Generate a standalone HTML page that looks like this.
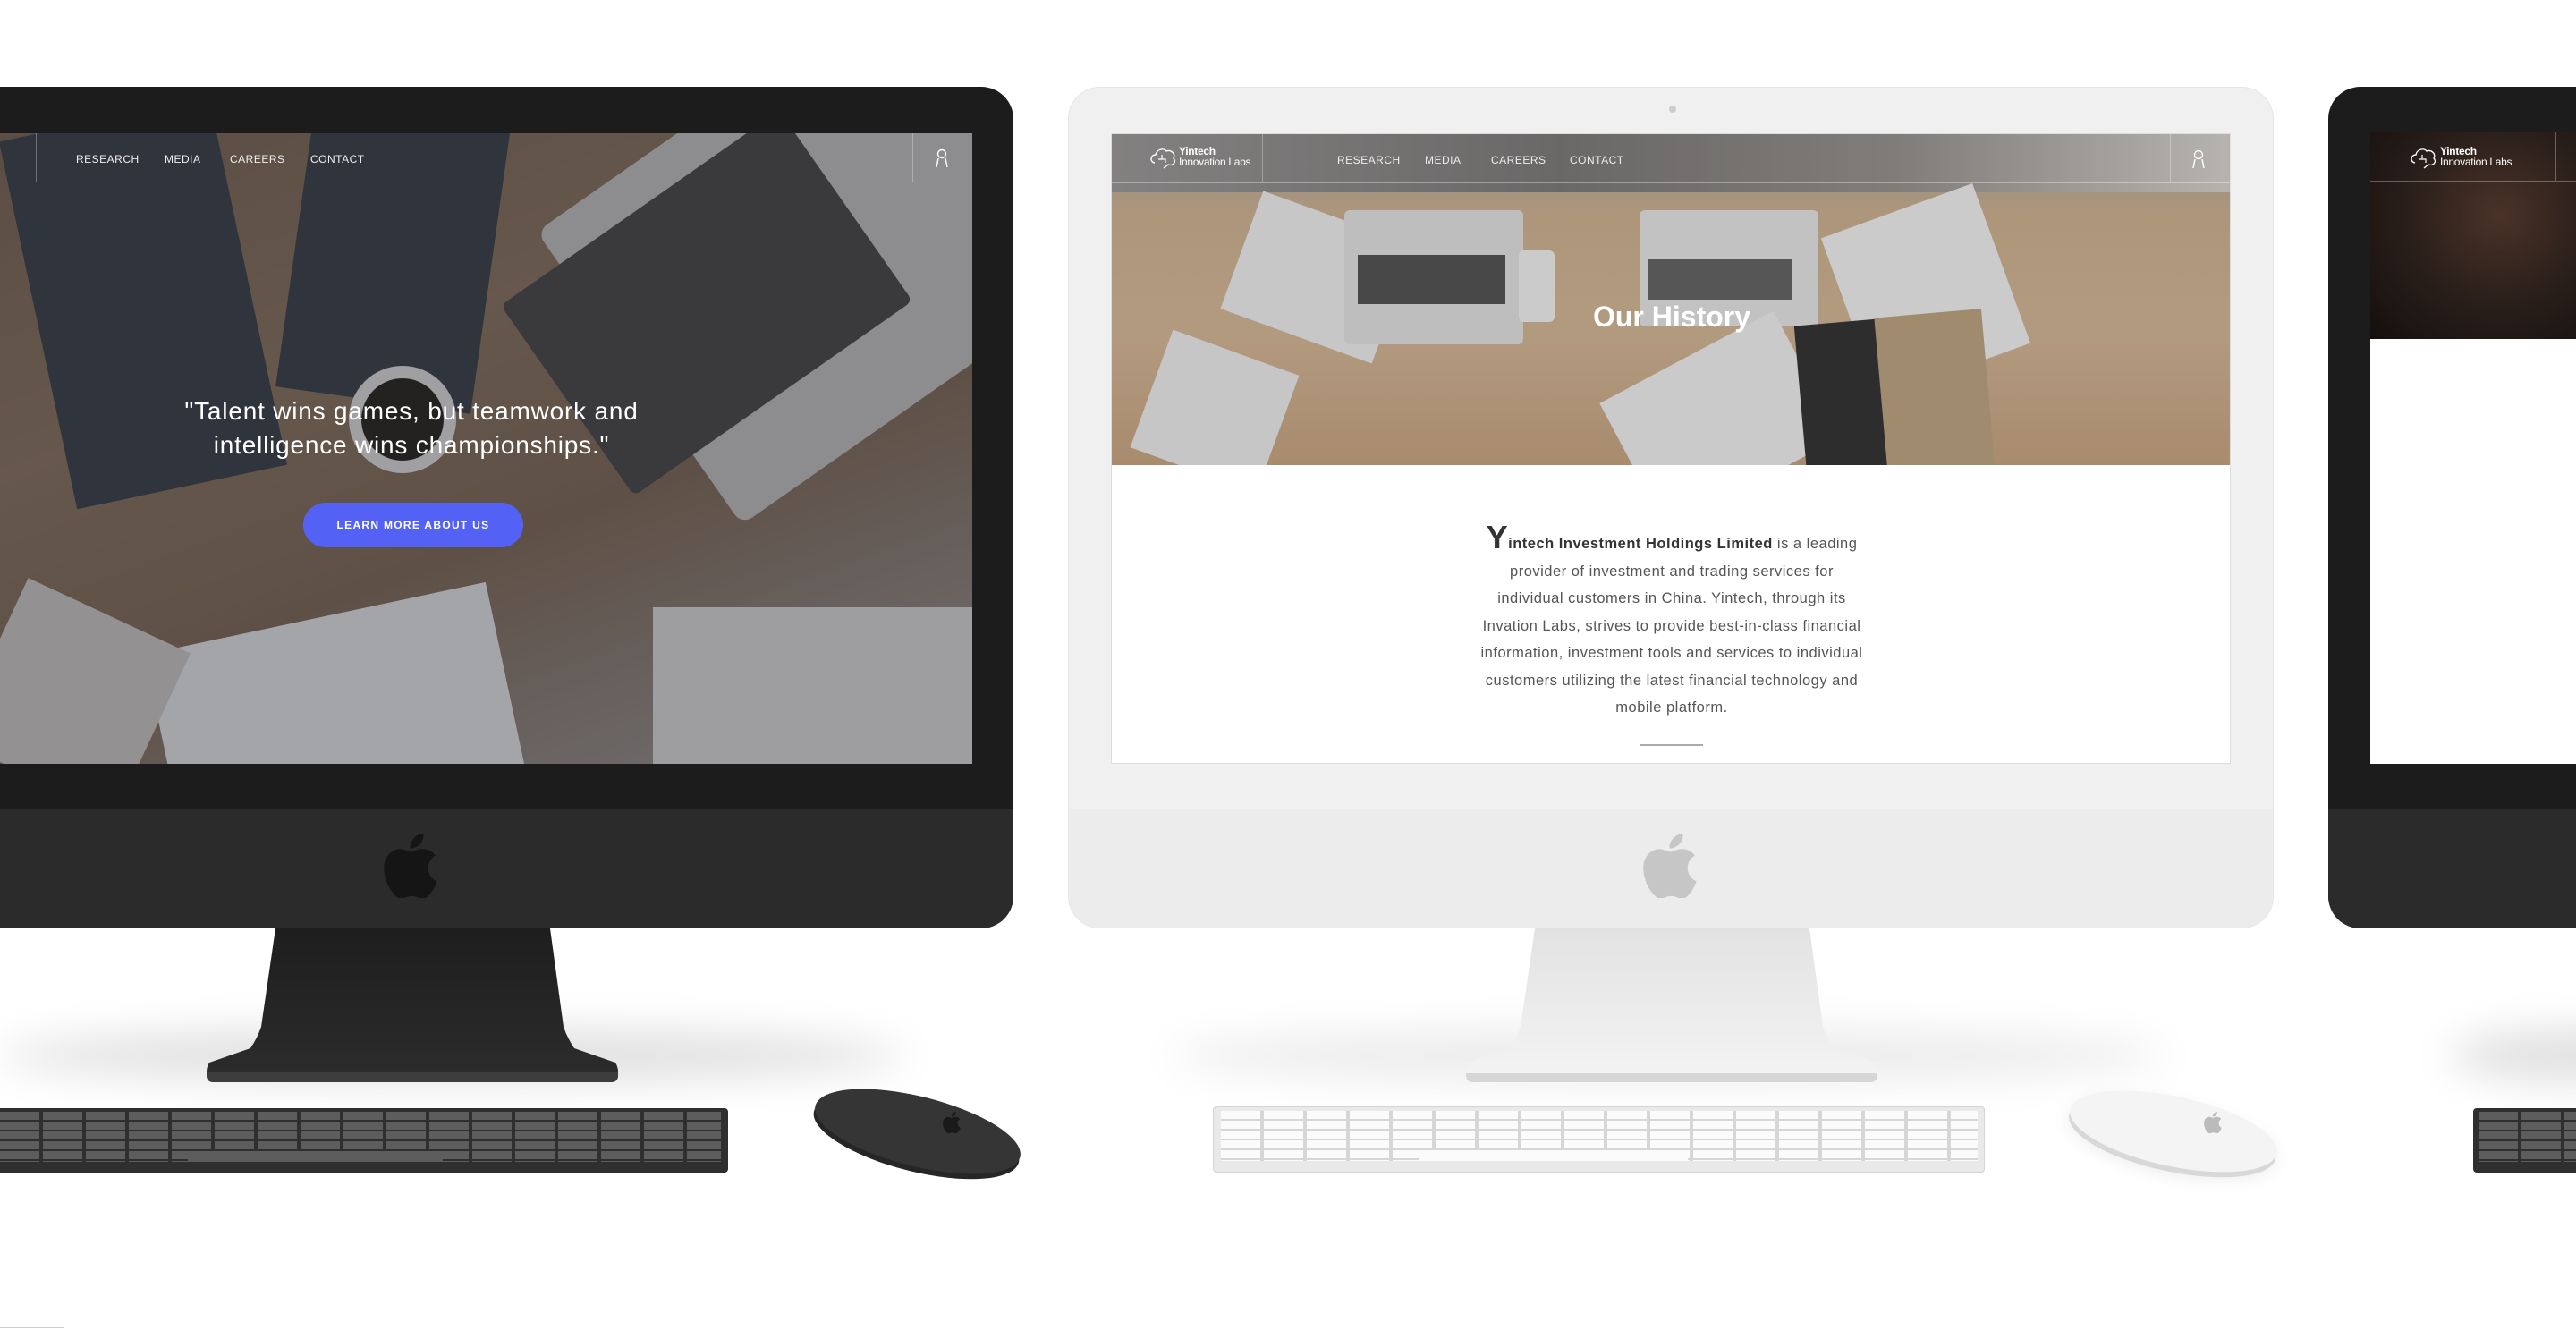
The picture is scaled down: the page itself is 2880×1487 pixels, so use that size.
<!DOCTYPE html>
<html><head><meta charset="utf-8"><style>
*{margin:0;padding:0;box-sizing:border-box}
body{width:2880px;height:1487px;background:#fff;position:relative;overflow:hidden;font-family:"Liberation Sans",sans-serif}
.a{position:absolute}
.nav{color:#eee;font-size:12px;letter-spacing:.5px}
.shadow{position:absolute;border-radius:50%;filter:blur(22px);background:rgba(0,0,0,.12)}
</style></head><body>

<div class="shadow" style="left:0;top:1150px;width:1010px;height:60px"></div>
<div class="shadow" style="left:1310px;top:1150px;width:1110px;height:60px;background:rgba(0,0,0,.08)"></div>
<div class="shadow" style="left:2740px;top:1150px;width:300px;height:60px"></div>

<!-- LEFT iMac -->
<div class="a" style="left:-40px;top:97px;width:1173px;height:941px;background:#1c1c1c;border-radius:36px;overflow:hidden">
  <div class="a" style="left:0;top:807px;width:100%;height:134px;background:#2b2b2b"></div>
</div>
<div class="a" style="left:0;top:149px;width:1087px;height:705px;overflow:hidden;background:linear-gradient(160deg,#6a5646 0%,#7a6452 35%,#6e5a49 60%,#8a8a8c 100%)">
  <div class="a" style="left:600px;top:110px;width:520px;height:400px;background:#b0b0b2;transform:rotate(-35deg);transform-origin:0 0;border-radius:14px"></div>
  <div class="a" style="left:600px;top:60px;width:380px;height:260px;background:#3a3a3c;transform:rotate(-35deg);border-radius:8px"></div>
  <div class="a" style="left:40px;top:-20px;width:240px;height:420px;background:#2c313a;transform:rotate(-12deg)"></div>
  <div class="a" style="left:330px;top:-30px;width:220px;height:330px;background:#2c313a;transform:rotate(8deg)"></div>
  <div class="a" style="left:730px;top:530px;width:400px;height:220px;background:#c9c9ca"></div>
  <div class="a" style="left:180px;top:540px;width:390px;height:220px;background:#d0d3d6;transform:rotate(-12deg)"></div>
  <div class="a" style="left:-20px;top:530px;width:200px;height:200px;background:#b9b7b3;transform:rotate(25deg)"></div>
  <div class="a" style="left:390px;top:260px;width:120px;height:120px;border-radius:50%;background:#1a1614;border:14px solid #ccc"></div>
  <div class="a" style="left:0;top:0;width:100%;height:100%;background:rgba(60,60,66,.3)"></div>
  <div class="a" style="left:40px;top:0;width:1px;height:54px;background:rgba(255,255,255,.3)"></div>
  <div class="a" style="left:1020px;top:0;width:1px;height:54px;background:rgba(255,255,255,.3)"></div>
  <div class="a" style="left:0;top:54px;width:100%;height:1px;background:rgba(255,255,255,.35)"></div>
  <div class="a nav" style="left:85px;top:22px">RESEARCH</div>
  <div class="a nav" style="left:184px;top:22px">MEDIA</div>
  <div class="a nav" style="left:257px;top:22px">CAREERS</div>
  <div class="a nav" style="left:347px;top:22px">CONTACT</div>
  <svg class="a" style="left:1045px;top:17px" width="16" height="22" viewBox="0 0 16 22"><circle cx="8" cy="6" r="4.5" fill="none" stroke="#fff" stroke-width="1.4"/><path d="M2 21 L4 11 M14 21 L12 11" stroke="#fff" stroke-width="1.4" fill="none"/></svg>
  <div class="a" style="left:0;top:292px;width:920px;text-align:center;color:#fff;font-size:28px;line-height:38px;letter-spacing:.8px">"Talent wins games, but teamwork and<br>intelligence wins championships."</div>
  <div class="a" style="left:339px;top:413px;width:246px;height:50px;border-radius:25px;background:#5362f5;color:#fff;font-size:12px;font-weight:bold;letter-spacing:1.3px;text-align:center;line-height:50px">LEARN MORE ABOUT US</div>
</div>
<svg class="a" style="left:428px;top:932px" width="62" height="72" viewBox="0 0 170 200"><path d="M140 106c0-25 21-37 22-38-12-17-30-20-37-20-16-2-31 9-39 9-8 0-20-9-33-9-17 0-33 10-42 25-18 31-5 78 13 103 9 12 19 26 32 26 13-1 18-8 33-8 16 0 20 8 33 8 14 0 23-13 31-25 10-14 14-28 14-29 0 0-27-10-27-42zM115 32c7-8 12-20 10-32-10 0-23 7-30 15-7 8-13 20-11 31 11 1 23-6 31-14z" fill="#151515"/></svg>
<svg class="a" style="left:220px;top:1038px" width="482" height="176" viewBox="0 0 482 176"><defs><linearGradient id="gd" x1="0" y1="0" x2="0" y2="1"><stop offset="0" stop-color="#1e1e1e"/><stop offset="1" stop-color="#2c2c2c"/></linearGradient></defs><path d="M88 0 L395 0 L410 110 Q414 122 422 134 L468 150 Q471 155 471 160 L471 164 Q471 172 463 172 L19 172 Q11 172 11 164 L11 160 Q11 155 14 150 L60 134 Q68 122 72 110 Z" fill="url(#gd)"/><path d="M11 160 L471 160 L471 164 Q471 172 463 172 L19 172 Q11 172 11 164 Z" fill="#3c3c3c"/></svg>
<div class="a" style="left:0;top:1239px;width:814px;height:72px;background:#2f2f2f;border-radius:0 4px 4px 0;overflow:hidden">
  <div class="a" style="left:0;top:4px;width:806px;height:56px;background:repeating-linear-gradient(90deg,#5d5d5d 0 44px,#2f2f2f 44px 48px),#5d5d5d"></div>
  <div class="a" style="left:0;top:4px;width:806px;height:56px;background:repeating-linear-gradient(180deg,transparent 0 9px,#2f2f2f 9px 11px)"></div>
  <div class="a" style="left:210px;top:48px;width:285px;height:12px;background:#5d5d5d"></div>
</div>
<div class="a" style="left:908px;top:1226px;width:236px;height:78px;background:#353535;border-radius:50%;transform:rotate(14deg);box-shadow:0 6px 0 #262626"></div>
<svg class="a" style="left:1053px;top:1243px" width="22" height="24" viewBox="0 0 170 200"><path d="M140 106c0-25 21-37 22-38-12-17-30-20-37-20-16-2-31 9-39 9-8 0-20-9-33-9-17 0-33 10-42 25-18 31-5 78 13 103 9 12 19 26 32 26 13-1 18-8 33-8 16 0 20 8 33 8 14 0 23-13 31-25 10-14 14-28 14-29 0 0-27-10-27-42zM115 32c7-8 12-20 10-32-10 0-23 7-30 15-7 8-13 20-11 31 11 1 23-6 31-14z" fill="#1a1a1a"/></svg>

<!-- MIDDLE iMac -->
<div class="a" style="left:1194px;top:97px;width:1348px;height:941px;background:#f0f0f0;border-radius:36px;overflow:hidden;border:1px solid #e6e6e6">
  <div class="a" style="left:0;top:807px;width:100%;height:134px;background:#ececec"></div>
  <div class="a" style="left:671px;top:20px;width:8px;height:8px;border-radius:50%;background:#ccc"></div>
</div>
<div class="a" style="left:1242px;top:149px;width:1252px;height:705px;background:#fff;overflow:hidden;border:1px solid #ddd">
  <div class="a" style="left:0;top:0;width:1252px;height:370px;overflow:hidden;background:linear-gradient(180deg,#a09a92 0%,#c4a683 25%,#c9ab88 60%,#bd9872 100%)">
    <div class="a" style="left:0;top:0;width:100%;height:65px;background:linear-gradient(90deg,#8d8b89,#6e6c6a 40%,#8a8580 70%,#cfcac3)"></div>
    <div class="a" style="left:140px;top:90px;width:180px;height:140px;background:#e3e3e3;transform:rotate(20deg)"></div>
    <div class="a" style="left:260px;top:85px;width:200px;height:150px;background:#d8d8d8;border-radius:6px"></div>
    <div class="a" style="left:275px;top:135px;width:165px;height:55px;background:#444"></div>
    <div class="a" style="left:590px;top:85px;width:200px;height:130px;background:#dcdcdc;border-radius:6px"></div>
    <div class="a" style="left:600px;top:140px;width:160px;height:45px;background:#555"></div>
    <div class="a" style="left:455px;top:130px;width:40px;height:80px;background:#e8e8e8;border-radius:6px"></div>
    <div class="a" style="left:820px;top:80px;width:180px;height:190px;background:#e8e8e8;transform:rotate(-20deg)"></div>
    <div class="a" style="left:570px;top:240px;width:220px;height:160px;background:#e6e6e6;transform:rotate(-28deg)"></div>
    <div class="a" style="left:40px;top:240px;width:150px;height:140px;background:#e2e2e2;transform:rotate(20deg)"></div>
    <div class="a" style="left:770px;top:210px;width:100px;height:170px;background:#222;transform:rotate(-5deg)"></div>
    <div class="a" style="left:860px;top:200px;width:120px;height:180px;background:#b39874;transform:rotate(-5deg)"></div>
    <div class="a" style="left:0;top:0;width:100%;height:100%;background:rgba(90,90,95,.2)"></div>
    <div class="a" style="left:0;top:54px;width:100%;height:1px;background:rgba(255,255,255,.35)"></div>
    <div class="a" style="left:168px;top:0;width:1px;height:54px;background:rgba(255,255,255,.3)"></div>
    <div class="a" style="left:1183px;top:0;width:1px;height:54px;background:rgba(255,255,255,.3)"></div>
    <svg class="a" style="left:42px;top:14px" width="32" height="26" viewBox="0 0 32 26"><path d="M6 18 C0 17 1 9 7 9 C8 3 16 1 19 5 C24 3 30 8 27 13 C31 17 26 22 21 20 L16 24" fill="none" stroke="#fff" stroke-width="1.4"/><path d="M10 14 h8 v4 M14 9 v5" stroke="#fff" stroke-width="1.2" fill="none"/></svg>
    <div class="a" style="left:75px;top:13px;color:#fff;font-size:12px;line-height:12px;letter-spacing:-.3px"><b>Yintech</b><br>Innovation Labs</div>
    <div class="a nav" style="left:252px;top:22px">RESEARCH</div>
    <div class="a nav" style="left:350px;top:22px">MEDIA</div>
    <div class="a nav" style="left:424px;top:22px">CAREERS</div>
    <div class="a nav" style="left:512px;top:22px">CONTACT</div>
    <svg class="a" style="left:1207px;top:17px" width="16" height="22" viewBox="0 0 16 22"><circle cx="8" cy="6" r="4.5" fill="none" stroke="#fff" stroke-width="1.4"/><path d="M2 21 L4 11 M14 21 L12 11" stroke="#fff" stroke-width="1.4" fill="none"/></svg>
    <div class="a" style="left:0;top:186px;width:100%;text-align:center;color:#fff;font-size:32px;font-weight:bold">Our History</div>
  </div>
  <div class="a" style="left:300px;top:441px;width:652px;text-align:center;color:#555;font-size:16.5px;line-height:30.5px;letter-spacing:.5px"><span style="font-size:36px;font-weight:bold;color:#333;line-height:20px">Y</span><b style="color:#333">intech Investment Holdings Limited</b> is a leading<br>provider of investment and trading services for<br>individual customers in China. Yintech, through its<br>Invation Labs, strives to provide best-in-class financial<br>information, investment tools and services to individual<br>customers utilizing the latest financial technology and<br>mobile platform.</div>
  <div class="a" style="left:590px;top:682px;width:71px;height:2px;background:#aaa"></div>
</div>
<svg class="a" style="left:1836px;top:932px" width="62" height="72" viewBox="0 0 170 200"><path d="M140 106c0-25 21-37 22-38-12-17-30-20-37-20-16-2-31 9-39 9-8 0-20-9-33-9-17 0-33 10-42 25-18 31-5 78 13 103 9 12 19 26 32 26 13-1 18-8 33-8 16 0 20 8 33 8 14 0 23-13 31-25 10-14 14-28 14-29 0 0-27-10-27-42zM115 32c7-8 12-20 10-32-10 0-23 7-30 15-7 8-13 20-11 31 11 1 23-6 31-14z" fill="#c6c6c6"/></svg>
<svg class="a" style="left:1628px;top:1038px" width="482" height="176" viewBox="0 0 482 176"><defs><linearGradient id="gw" x1="0" y1="0" x2="0" y2="1"><stop offset="0" stop-color="#e2e2e2"/><stop offset="1" stop-color="#f4f4f4"/></linearGradient></defs><path d="M88 0 L395 0 L410 110 Q414 122 422 134 L468 150 Q471 155 471 160 L471 164 Q471 172 463 172 L19 172 Q11 172 11 164 L11 160 Q11 155 14 150 L60 134 Q68 122 72 110 Z" fill="url(#gw)"/><path d="M11 162 L471 162 L471 164 Q471 172 463 172 L19 172 Q11 172 11 164 Z" fill="#d6d6d6"/></svg>
<div class="a" style="left:1356px;top:1237px;width:863px;height:74px;background:#e9e9e9;border-radius:4px;overflow:hidden;border:1px solid #d4d4d4">
  <div class="a" style="left:8px;top:4px;width:846px;height:56px;background:repeating-linear-gradient(90deg,#fbfbfb 0 44px,#d6d6d6 44px 48px),#fbfbfb"></div>
  <div class="a" style="left:8px;top:4px;width:846px;height:56px;background:repeating-linear-gradient(180deg,transparent 0 9px,#d6d6d6 9px 11px)"></div>
  <div class="a" style="left:230px;top:48px;width:300px;height:12px;background:#fbfbfb"></div>
</div>
<div class="a" style="left:2312px;top:1226px;width:236px;height:78px;background:#f4f4f4;border-radius:50%;transform:rotate(12deg);box-shadow:0 6px 0 #d8d8d8, 0 8px 20px rgba(0,0,0,.08)"></div>
<svg class="a" style="left:2463px;top:1243px" width="22" height="24" viewBox="0 0 170 200"><path d="M140 106c0-25 21-37 22-38-12-17-30-20-37-20-16-2-31 9-39 9-8 0-20-9-33-9-17 0-33 10-42 25-18 31-5 78 13 103 9 12 19 26 32 26 13-1 18-8 33-8 16 0 20 8 33 8 14 0 23-13 31-25 10-14 14-28 14-29 0 0-27-10-27-42zM115 32c7-8 12-20 10-32-10 0-23 7-30 15-7 8-13 20-11 31 11 1 23-6 31-14z" fill="#bbb"/></svg>

<!-- RIGHT iMac -->
<div class="a" style="left:2603px;top:97px;width:400px;height:941px;background:#1c1c1c;border-radius:36px;overflow:hidden"></div>
<div class="a" style="left:2650px;top:148px;width:240px;height:706px;background:#fff;overflow:hidden">
  <div class="a" style="left:0;top:0;width:100%;height:231px;background:radial-gradient(ellipse at 60% 40%,#4a3328 0%,#2a1f1a 50%,#140f0d 100%)"></div>
  <div class="a" style="left:0;top:54px;width:100%;height:1px;background:rgba(255,255,255,.3)"></div>
  <div class="a" style="left:207px;top:0;width:1px;height:54px;background:rgba(255,255,255,.3)"></div>
  <svg class="a" style="left:44px;top:16px" width="32" height="26" viewBox="0 0 32 26"><path d="M6 18 C0 17 1 9 7 9 C8 3 16 1 19 5 C24 3 30 8 27 13 C31 17 26 22 21 20 L16 24" fill="none" stroke="#fff" stroke-width="1.4"/><path d="M10 14 h8 v4 M14 9 v5" stroke="#fff" stroke-width="1.2" fill="none"/></svg>
  <div class="a" style="left:78px;top:15px;color:#fff;font-size:12px;line-height:12px;letter-spacing:-.3px"><b>Yintech</b><br>Innovation Labs</div>
</div>
<div class="a" style="left:2603px;top:904px;width:300px;height:134px;background:#2b2b2b;border-radius:0 0 0 36px"></div>
<div class="a" style="left:2765px;top:1239px;width:130px;height:72px;background:#2f2f2f;border-radius:4px;overflow:hidden">
  <div class="a" style="left:6px;top:4px;width:130px;height:56px;background:repeating-linear-gradient(90deg,#5d5d5d 0 44px,#2f2f2f 44px 48px)"></div>
  <div class="a" style="left:6px;top:4px;width:130px;height:56px;background:repeating-linear-gradient(180deg,transparent 0 9px,#2f2f2f 9px 11px)"></div>
</div>
<div class="a" style="left:0;top:1484px;width:72px;height:1px;background:#ccc"></div>
</body></html>
